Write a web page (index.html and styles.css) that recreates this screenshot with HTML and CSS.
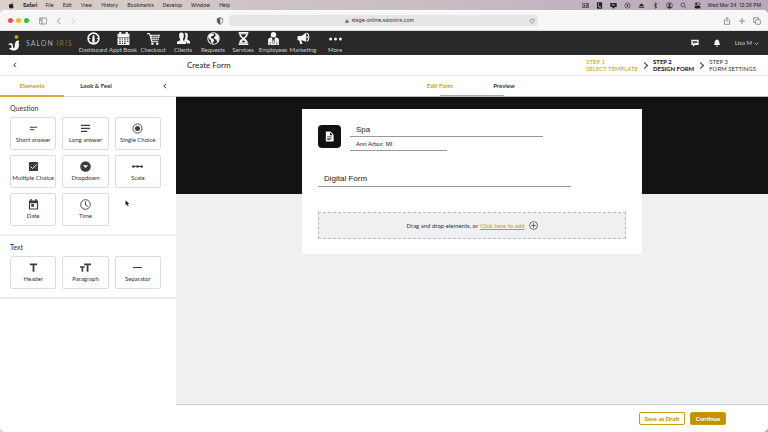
FILE: index.html
```html
<!DOCTYPE html>
<html lang="en">
<head>
<meta charset="utf-8">
<title>Create Form</title>
<link rel="stylesheet" href="styles.css">
</head>
<body>
<div class="menubar">
  <svg class="apple" viewBox="0 0 24 24"><path d="M17 12.500c0-2.600 2-3.800 2.200-4-1.200-1.800-3.100-2-3.800-2-1.600-.2-3 .9-3.900.9-.8 0-2-.9-3.300-.9C4.800 6.600 3 9.300 3 12.800 3 17 6 22 8.300 22c1.200 0 1.700-.8 3.300-.8 1.500 0 2 .8 3.300.8 2.200 0 4.400-4 4.900-5.800-1.700-.7-2.800-2-2.800-3.700zM14.500 4.900C15.300 4 15.700 2.900 15.600 1.500c-2 .1-4.100 2-3.900 4.500 1.100 0 2.200-.5 2.800-1.100z"/></svg>
  <strong>Safari</strong><span>File</span><span>Edit</span><span>View</span><span>History</span><span>Bookmarks</span><span>Develop</span><span>Window</span><span>Help</span>
  <div class="tray">
    <svg viewBox="0 0 24 24"><path class="line" d="M1 5h15v14H1zM19 5h4v14h-4z"/><circle cx="8" cy="12" r="3"/></svg>
    <svg viewBox="0 0 24 24"><path d="M3 1h18v22H3z"/><path class="cut" d="M8 4v12h8M11 18h6"/></svg>
    <svg viewBox="0 0 24 24"><path d="M1 3h22v14h-8l2 4H7l2-4H1z"/><path class="cut" d="M7 10h10M10 7v6"/></svg>
    <svg viewBox="0 0 24 24"><circle class="line" cx="12" cy="12" r="9"/><path d="M10 7l6 5-6 5z"/></svg>
    <svg viewBox="0 0 24 24"><path d="M12 4l9 10H3zM3 16h18v4H3z"/></svg>
    <svg viewBox="0 0 24 24"><path class="line" d="M6 7l11 10-5 5V2l5 5L6 17"/></svg>
    <svg viewBox="0 0 24 24"><circle class="line" cx="12" cy="12" r="10"/><circle cx="12" cy="9" r="4"/><path d="M5 18c2-5 12-5 14 0l-7 4z"/></svg>
    <svg viewBox="0 0 24 24"><circle class="line" cx="10" cy="10" r="7"/><path class="line" d="M15 15l7 7"/></svg>
    <svg viewBox="0 0 24 24"><rect class="line" x="3" y="3" width="18" height="7" rx="3"/><rect x="2" y="13" width="20" height="9" rx="4"/><circle cx="8" cy="6.500" r="3"/></svg>
    <span>Wed Mar 24&nbsp; 12:26 PM</span>
  </div>
</div>

<div class="window">
  <div class="browser">
    <div class="browser-left">
      <i class="dot red"></i><i class="dot amber"></i><i class="dot green"></i>
      <svg class="side-icon" viewBox="0 0 24 20"><rect x="1" y="1" width="22" height="18" rx="2"/><path d="M9 1v18M3 5h4M3 9h4"/></svg>
      <svg viewBox="0 0 24 24"><path d="M16 3l-9 9 9 9"/></svg>
      <svg class="faint" viewBox="0 0 24 24"><path d="M8 3l9 9-9 9"/></svg>
    </div>
    <svg class="shield" viewBox="0 0 24 24"><path d="M12 2c3 2 6 2 8 3v7c0 5-4 8-8 10-4-2-8-5-8-10V5c2-1 5-1 8-3z"/><path class="half" d="M12 2v20c-4-2-8-5-8-10V5c2-1 5-1 8-3z"/></svg>
    <div class="address">
      <svg viewBox="0 0 24 24"><rect class="solid" x="4" y="10" width="16" height="12" rx="2"/><path d="M7 10V7a5 5 0 0 1 10 0v3"/></svg>
      <span>stage-online.saloniris.com</span>
      <svg class="reload" viewBox="0 0 24 24"><path d="M19 8a8 8 0 1 0 1 5M20 3v6h-6"/></svg>
    </div>
    <div class="browser-right">
      <svg viewBox="0 0 24 24"><path d="M8 9H4v13h16V9h-4M12 15V2M8 6l4-4 4 4"/></svg>
      <svg viewBox="0 0 24 24"><path d="M12 3v18M3 12h18"/></svg>
      <svg viewBox="0 0 24 24"><rect x="8" y="8" width="14" height="14" rx="2"/><path d="M8 16H2V2h14v6"/></svg>
    </div>
  </div>

  <nav class="nav">
    <a class="brand" href="#">
      <svg viewBox="0 0 24 32"><circle class="gold" cx="17" cy="4" r="4"/><path d="M0 20c2-4 7-6 9-2 2 3 0 8 3 8 2 0 1-5 2-9 1-5 5-7 9-5-3 2-1 5-1 9 0 6-5 10-11 10-5 0-8-2-9-5 4 1 6-1 5-4-1-3-4-3-7-2z"/></svg>
      <span>SALON <b>IRIS</b></span>
    </a>
    <div class="nav-items">
      <a href="#"><svg viewBox="0 0 24 24"><circle class="ring" cx="12" cy="12" r="10"/><path d="M10.500 6h3l1 9a2.700 2.700 0 1 1-5 0z"/><path d="M3 11h3v2H3zM18 11h3v2h-3zM5 19h14l-3 3H8z"/></svg>Dashboard</a>
      <a href="#"><svg viewBox="0 0 24 24"><path d="M1 3h3V0h4v3h8V0h4v3h3v6H1z"/><path fill-rule="evenodd" d="M1 10h22v14H1zM4 12v2h3v-2zm5 0v2h2v-2zm4 0v2h3v-2zm5 0v2h3v-2zM4 16v2h3v-2zm5 0v2h2v-2zm4 0v2h3v-2zm5 0v2h3v-2zM4 20v2h3v-2zm5 0v2h2v-2zm4 0v2h3v-2z"/></svg>Appt Book</a>
      <a href="#"><svg viewBox="0 0 24 24"><path d="M0 2h5l1 3h18l-3 10H9l1 2h11v2H8L4 4H0z"/><circle cx="10" cy="21.500" r="2.300"/><circle cx="19" cy="21.500" r="2.300"/><path class="grid" d="M7 8.500h15M8 12h14M11 5v10M15 5v10M19 5v10"/></svg>Checkout</a>
      <a href="#"><svg viewBox="0 0 24 24"><path d="M14 2c4-2 7 1 6 6-.4 2-1 4-1 6l5 3v4h-5c0-3-4-4-6-5 3-4 4-9 1-14z"/><path d="M8 1c4 0 5 3 4.500 7-.3 3-1.500 5-1.500 7l6 3v4H0v-4l6-3c0-2-2-4-2-7-.3-4 .5-7 4-7z"/></svg>Clients</a>
      <a href="#"><svg viewBox="0 0 24 24"><circle class="ring globe" cx="12" cy="12" r="10.500"/><path d="M3 6l5-3 5 1-1 3-4 1-1 3 5 2 1 3-3 5-2-1-1-5-4-4zM15 3l6 4 1 7-3 5-2-5-3-1-1-3 3-3z"/></svg>Requests</a>
      <a href="#"><svg viewBox="0 0 24 24"><path d="M3 0h18v3H3zM3 21h18v3H3z"/><path fill-rule="evenodd" d="M4 3h16c0 5-3 7-6 9 3 2 6 4 6 9H4c0-5 3-7 6-9-3-2-6-4-6-9zm3 1c1 3 3 5 5 6 2-1 4-3 5-6zm1 15h8l-4-4z"/></svg>Services</a>
      <a href="#"><svg viewBox="0 0 24 24"><circle cx="12" cy="5" r="5"/><path d="M2 14c0-3 4-4 7-4l2 7 1-5 1 5 2-7c3 0 7 1 7 4v10H2z"/><path class="grid" d="M12 11l-2 8 2 3 2-3zM6 18v6M18 18v6"/></svg>Employees</a>
      <a href="#"><svg viewBox="0 0 24 24"><path d="M1 8l8-1 8-6v17l-8-3h-1l2 7H6l-2-7H1z"/><path class="arc" d="M18 2c5 2 5 13 0 15"/><circle cx="19" cy="9.500" r="1.500"/></svg>Marketing</a>
      <a href="#"><svg viewBox="0 0 24 24"><circle cx="3" cy="13" r="2.800"/><circle cx="12" cy="13" r="2.800"/><circle cx="21" cy="13" r="2.800"/></svg>More</a>
    </div>
    <div class="account">
      <svg viewBox="0 0 24 24"><path fill-rule="evenodd" d="M1 2h22v16H12l-6 5v-5H1zm4 4v2h14V6zm0 4v2h14v-2zm0 4v1h8v-1z"/></svg>
      <svg viewBox="0 0 24 24"><path d="M12 1c1 0 2 1 2 2 4 1 5 4 5 8 0 3 1 5 3 7H2c2-2 3-4 3-7 0-4 1-7 5-8 0-1 1-2 2-2zM9 20h6c0 4-6 4-6 0z"/></svg>
      <button type="button">Lisa M <svg class="chev" viewBox="0 0 24 24"><path d="M3 8l9 9 9-9"/></svg></button>
    </div>
  </nav>

  <header class="page-head">
    <button class="back" type="button" aria-label="Back"><svg class="chev" viewBox="0 0 24 24"><path d="M16 3l-9 9 9 9"/></svg></button>
    <h1>Create Form</h1>
    <ol class="steps">
      <li class="done">STEP 1<br>SELECT TEMPLATE</li>
      <li class="current">STEP 2<br>DESIGN FORM</li>
      <li>STEP 3<br>FORM SETTINGS</li>
    </ol>
  </header>

  <main class="workspace">
    <aside class="panel">
      <div class="tabs">
        <button class="tab active" type="button">Elements</button>
        <button class="tab" type="button">Look &amp; Feel</button>
        <button class="collapse" type="button" aria-label="Collapse"><svg class="chev" viewBox="0 0 24 24"><path d="M16 3l-9 9 9 9"/></svg></button>
      </div>
      <section class="group">
        <h2>Question</h2>
        <div class="tiles">
          <button type="button"><svg viewBox="0 0 24 24"><path d="M4 8h16v2.500H4zM4 13.500h10V16H4z"/></svg>Short answer</button>
          <button type="button"><svg viewBox="0 0 24 24"><path d="M2 4h20v2.500H2zM2 10.500h20V13H2zM2 17h14v2.500H2z"/></svg>Long answer</button>
          <button type="button"><svg viewBox="0 0 24 24"><circle class="line" cx="12" cy="12" r="10"/><circle cx="12" cy="12" r="5.500"/></svg>Single Choice</button>
          <button type="button"><svg viewBox="0 0 24 24"><rect x="2" y="2" width="20" height="20" rx="2"/><path class="tick" d="M5.500 12l4.500 4.500L19 7.500"/></svg>Multiple Choice</button>
          <button type="button"><svg viewBox="0 0 24 24"><circle cx="12" cy="12" r="11.500"/><path class="white" d="M6.500 9.500h11L12 15z"/></svg>Dropdown</button>
          <button type="button"><svg viewBox="0 0 24 24"><circle cx="3" cy="12" r="2.800"/><circle cx="12" cy="12" r="2.800"/><circle cx="21" cy="12" r="2.800"/><path d="M3 11h18v2H3z"/></svg>Scale</button>
          <button type="button"><svg viewBox="0 0 24 24"><path fill-rule="evenodd" d="M2 3h3V0h3v3h8V0h3v3h3v20H2zm2.500 6v11.500h15V9z"/><path d="M7 11h6v6H7z"/></svg>Date</button>
          <button type="button"><svg viewBox="0 0 24 24"><circle class="line" cx="12" cy="12" r="10.500"/><path class="line" d="M12 5v8l5 3"/></svg>Time</button>
        </div>
      </section>
      <section class="group">
        <h2>Text</h2>
        <div class="tiles">
          <button type="button"><svg viewBox="0 0 24 24"><path d="M4 3h16v4h-6v14h-4V7H4z"/></svg>Header</button>
          <button type="button"><svg viewBox="0 0 24 24"><path d="M9 3h15v4h-5.500v14h-4V7H9zM0 9h10v3.500H7V21H3.500v-8.500H0z"/></svg>Paragraph</button>
          <button type="button"><svg viewBox="0 0 24 24"><path d="M2 10.800h20v2.400H2z"/></svg>Separator</button>
        </div>
      </section>
      <svg class="pointer" viewBox="0 0 12 18"><path d="M1 1v13l3-3 3 6 2-1-3-6h5z"/></svg>
    </aside>

    <section class="editor">
      <div class="view-tabs">
        <button class="view active" type="button">Edit Form</button>
        <button class="view" type="button">Preview</button>
      </div>
      <div class="canvas">
        <form class="sheet">
          <div class="business">
            <div class="logo"><svg viewBox="0 0 24 24"><path fill-rule="evenodd" d="M4 1h10l7 7v15H4zm9 2v6h6zM7 12v1.500h10V12zm0 3v1.500h10V15zm0 3v1.500h7V18z"/></svg></div>
            <div class="fields">
              <input class="name" aria-label="Business name" value="Spa">
              <input class="place" aria-label="Location" value="Ann Arbor, MI">
            </div>
          </div>
          <input class="title" aria-label="Form title" value="Digital Form">
          <div class="drop">Drag and drop elements, or <a href="#">Click here to add</a>
            <svg viewBox="0 0 24 24"><circle cx="12" cy="12" r="10.500"/><path d="M12 6v12M6 12h12"/></svg>
          </div>
        </form>
      </div>
    </section>
  </main>

  <footer class="actions">
    <button type="button">Save as Draft</button>
    <button class="primary" type="button">Continue</button>
  </footer>
</div>
</body>
</html>
```
FILE: styles.css
```css
* { box-sizing: border-box; }

body {
  margin: 0;
  min-height: 100vh;
  display: flex;
  flex-direction: column;
  background: linear-gradient(90deg, #dccfca, #c9bfc3 50%, #b9a8bb);
  font: 6px/8px Lato, "Liberation Sans", sans-serif;
  color: #333;
}

button {
  border: 0;
  padding: 0;
  background: none;
  font: inherit;
  color: inherit;
}

a { color: inherit; text-decoration: none; }
svg { display: block; flex: none; }

.chev {
  width: 6px;
  height: 6px;
  fill: none;
  stroke: currentColor;
  stroke-width: 4;
}

/* System menu bar */
.menubar {
  height: 10px;
  padding: 0 7px 0 8px;
  display: flex;
  align-items: center;
  gap: 9px;
  font: 5px/10px Inter, sans-serif;
  color: #222;
}
.menubar svg { width: 7px; height: 7px; fill: #222; }
.menubar strong { margin: 0 -1px; }
.menubar .line { fill: none; stroke: #222; stroke-width: 2; }
.menubar .cut { fill: none; stroke: #ddd; stroke-width: 2; }
.tray { margin-left: auto; display: flex; align-items: center; gap: 7px; }

/* Browser window */
.window {
  flex: 1;
  display: flex;
  flex-direction: column;
  background: #fff;
  border-radius: 5px;
  overflow: hidden;
}

.browser {
  height: 21px;
  padding: 0 7px 0 8px;
  display: grid;
  grid-template-columns: 27% 8px 41% 1fr;
  align-items: center;
  column-gap: 5px;
  background: #f7f6f6;
  border-top: 1px solid #fff;
  border-bottom: 1px solid #ddd;
}
.browser svg { width: 8px; height: 8px; fill: none; stroke: #666; stroke-width: 2; }
.browser-left { display: flex; align-items: center; gap: 3px; }
.dot { width: 5px; height: 5px; border-radius: 50%; }
.red { background: #fb4c48; }
.amber { background: #fbb32c; }
.green { background: #27c33c; }
.browser .side-icon { margin: 0 5px 0 7px; }
.browser-left svg + svg { margin-right: 3px; }
.browser .faint { stroke: #bbb; }
.browser .half { fill: #555; }
.address {
  height: 11px;
  padding: 0 3px;
  display: flex;
  align-items: center;
  justify-content: center;
  gap: 2px;
  background: #e6e5e5;
  border-radius: 3px;
  font: 5px/11px Inter, sans-serif;
}
.browser .address svg { width: 4px; height: 4px; }
.address svg:first-child { margin-left: auto; }
.address .solid { fill: #666; }
.browser .address .reload { width: 6px; height: 6px; margin-left: auto; }
.browser-right { display: flex; justify-content: flex-end; gap: 7px; }

/* Product navigation */
.nav {
  height: 24px;
  padding: 0 9px 0 8px;
  display: flex;
  align-items: center;
  background: #292929;
  color: #ccc;
}
.nav svg { fill: #f4f4f4; }
.nav .ring { fill: none; stroke: #f4f4f4; stroke-width: 3; }
.nav .globe, .nav .arc { fill: none; stroke: #f4f4f4; stroke-width: 2; }
.nav .grid { fill: none; stroke: #292929; stroke-width: 1; }
.brand { width: 70px; display: flex; align-items: center; gap: 6px; white-space: nowrap; font-size: 7px; color: #aaa; letter-spacing: 1px; }
.brand svg { width: 12px; height: 16px; }
.brand .gold { fill: #c99b0c; }
.brand b { font-weight: 400; color: #8d7431; }
.nav-items { display: flex; }
.nav-items a { width: 30px; display: flex; flex-direction: column; align-items: center; gap: 1px; white-space: nowrap; }
.nav-items a:last-child { margin-left: 2px; }
.nav-items svg { width: 13px; height: 13px; }
.account { margin-left: auto; display: flex; align-items: center; gap: 14px; }
.account svg { width: 8px; height: 8px; }
.account button { display: flex; align-items: center; gap: 2px; }
.account .chev { width: 5px; height: 5px; fill: none; }

/* Page heading and progress */
.page-head {
  height: 21px;
  padding: 0 12px;
  display: flex;
  align-items: center;
  border-bottom: 1px solid #e4e4e4;
}
.back { width: 175px; }
.page-head h1 { margin: 0; font-size: 8px; font-weight: 400; line-height: 10px; color: #222; }
.steps { margin: 0 0 0 auto; padding: 0; display: flex; list-style: none; line-height: 7px; }
.steps li { white-space: nowrap; position: relative; }
.steps li + li { margin-left: 15px; }
.steps li + li::before {
  content: "";
  position: absolute;
  left: -11px;
  top: 5px;
  width: 4px;
  height: 4px;
  border: solid #333;
  border-width: 1px 1px 0 0;
  transform: rotate(45deg);
}
.steps .done { color: #c79c0f; }
.steps .current { color: #111; font-weight: 700; }

/* Workspace */
.workspace { flex: 1; display: flex; }
.panel { position: relative; width: 176px; display: flex; flex-direction: column; }
.tabs {
  height: 21px;
  padding-right: 8px;
  display: flex;
  justify-content: space-between;
  border-bottom: 1px solid #ddd;
}
.tab { width: 64px; font-weight: 700; }
.tab.active { margin-bottom: -1px; color: #c79c0f; border-bottom: 2px solid #d2ae35; }
.collapse { margin-left: auto; }
.group { padding: 7px 15px 8px 10px; border-bottom: 2px solid #eee; }
.group h2 { margin: 0 0 5px; font-size: 7px; font-weight: 400; line-height: 8px; }
.tiles { display: grid; grid-template-columns: repeat(3, 1fr); gap: 5px 6px; }
.tiles button {
  height: 33px;
  display: flex;
  flex-direction: column;
  align-items: center;
  justify-content: center;
  gap: 2px;
  border: 1px solid #ddd;
  border-radius: 2px;
  white-space: nowrap;
}
.tiles svg { width: 11px; height: 11px; fill: #3c3c3c; }
.tiles .line { fill: none; stroke: #3c3c3c; stroke-width: 2; }
.tiles .tick { fill: none; stroke: #fff; stroke-width: 2; }
.tiles .white { fill: #fff; }
.pointer { position: absolute; left: 125px; top: 124px; width: 5px; height: 7px; fill: #111; }

.editor { flex: 1; display: flex; flex-direction: column; }
.view-tabs { height: 21px; display: flex; justify-content: center; border-bottom: 1px solid #bbb; }
.view { width: 64px; font-weight: 700; }
.view.active { color: #c79c0f; background: linear-gradient(#d2ae35, #d2ae35) 32px 100% / 32px 1px no-repeat; }
.view:not(.active) { background: linear-gradient(#d2ae35, #d2ae35) 0 100% / 32px 1px no-repeat; }
.canvas {
  flex: 1;
  padding: 12px 126px;
  background: linear-gradient(#131313, #131313) 0 0 / 100% 97px no-repeat #eef0f2;
  border-bottom: 1px solid #ccc;
}
.sheet { padding: 13px 16px 15px; background: #fff; }
.business { display: flex; gap: 9px; }
.logo { width: 23px; height: 23px; margin-top: 3px; display: grid; place-items: center; background: #111; border-radius: 4px; }
.logo svg { width: 11px; height: 11px; fill: #fff; }
.fields { flex: 1; }
input {
  display: block;
  border: 0;
  border-bottom: 1px solid #999;
  border-radius: 0;
  padding: 0 6px;
  background: none;
  font: 8px/10px "Liberation Sans", Arial, sans-serif;
  color: #222;
}
.name { width: 70%; height: 15px; }
.place { width: 35%; height: 14px; font-size: 6px; }
.title { width: 82%; height: 17px; margin-top: 19px; }
.drop {
  height: 27px;
  margin-top: 25px;
  display: flex;
  align-items: center;
  justify-content: center;
  gap: 2px;
  background: #eef0f2;
  border: 1px dashed #bbb;
}
.drop a { color: #c79c0f; text-decoration: underline; }
.drop svg { width: 9px; height: 9px; margin-left: 2px; fill: none; stroke: #444; stroke-width: 2; }

/* Form actions */
.actions { height: 27px; padding: 0 42px; display: flex; align-items: center; justify-content: flex-end; gap: 5px; }
.actions button { width: 46px; height: 13px; border: 1px solid #c79c0f; border-radius: 2px; color: #b98e00; font-weight: 700; }
.actions .primary { width: 36px; background: #c29200; color: #fff; }
```
